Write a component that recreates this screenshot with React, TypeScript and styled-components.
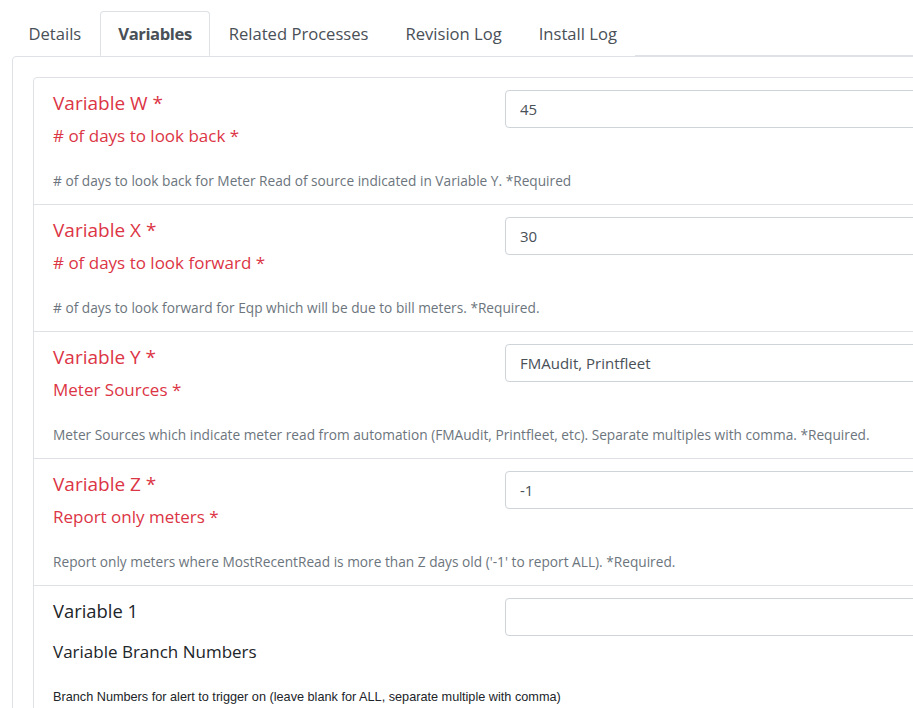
import React from "react";
import styled, { createGlobalStyle } from "styled-components";

const Global = createGlobalStyle`
  html, body { margin: 0; padding: 0; background: #fff; overflow: hidden; }
  body { font-family: "Open Sans", "Noto Sans", sans-serif; color: #212529; }
  * { box-sizing: border-box; }
`;

const Page = styled.div`
  width: 1300px;
  padding-top: 11px;
`;

const TabBar = styled.ul`
  display: flex;
  list-style: none;
  margin: 0 0 0 10px;
  padding: 0;
  border-bottom: 1px solid #dee2e6;
`;

const Tab = styled.li<{ $active?: boolean }>`
  height: 45px;
  display: flex;
  align-items: center;
  padding: 0 17.5px;
  margin-bottom: -1px;
  font-size: 16.6px;
  color: #495057;
  font-weight: ${(p) => (p.$active ? 700 : 400)};
  letter-spacing: ${(p) => (p.$active ? "-0.4px" : "0")};
  background: #fff;
  border: 1px solid ${(p) => (p.$active ? "#dee2e6" : "transparent")};
  border-bottom-color: ${(p) => (p.$active ? "#fff" : "transparent")};
  border-radius: 4px 4px 0 0;
`;

const Panel = styled.div`
  margin: 0 0 0 12px;
  border: 1px solid #dee2e6;
  border-radius: 4px;
  padding: 20px;
`;

const Card = styled.div`
  border: 1px solid #dee2e6;
  border-radius: 4px;
`;

const Row = styled.div`
  display: grid;
  grid-template-columns: 452px 1fr;
  padding: 10px 0 13px 19px;
  border-bottom: 1px solid #dee2e6;
  &:last-child { border-bottom: none; }
`;

const LabelCol = styled.div`
  display: flex;
  flex-direction: column;
`;

const Label = styled.div<{ $required?: boolean; $gap?: number; $size: number }>`
  font-size: ${(p) => p.$size}px;
  line-height: 30px;
  margin-top: ${(p) => p.$gap ?? 0}px;
  color: ${(p) => (p.$required ? "#dc3545" : "#212529")};
  white-space: nowrap;
`;

const Help = styled.div<{ $plain?: boolean }>`
  margin-top: 20px;
  line-height: 20px;
  white-space: nowrap;
  font-size: ${(p) => (p.$plain ? "12.7px" : "13.7px")};
  font-family: ${(p) =>
    p.$plain ? `"Liberation Sans", Arial, sans-serif` : `"Open Sans", "Noto Sans", sans-serif`};
  color: ${(p) => (p.$plain ? "#212529" : "#6c757d")};
`;

const Input = styled.input`
  margin-top: 2px;
  height: 38px;
  width: 100%;
  border: 1px solid #ced4da;
  border-radius: 4px;
  padding: 0 14px;
  font-family: "Open Sans", "Noto Sans", sans-serif;
  font-size: 15px;
  color: #495057;
  background: #fff;
  outline: none;
`;

type Variable = {
  name: string;
  title: string;
  help: string;
  value: string;
  required: boolean;
};

const variables: Variable[] = [
  {
    name: "Variable W *",
    title: "# of days to look back *",
    help: "# of days to look back for Meter Read of source indicated in Variable Y. *Required",
    value: "45",
    required: true,
  },
  {
    name: "Variable X *",
    title: "# of days to look forward *",
    help: "# of days to look forward for Eqp which will be due to bill meters. *Required.",
    value: "30",
    required: true,
  },
  {
    name: "Variable Y *",
    title: "Meter Sources *",
    help: "Meter Sources which indicate meter read from automation (FMAudit, Printfleet, etc). Separate multiples with comma. *Required.",
    value: "FMAudit, Printfleet",
    required: true,
  },
  {
    name: "Variable Z *",
    title: "Report only meters *",
    help: "Report only meters where MostRecentRead is more than Z days old ('-1' to report ALL). *Required.",
    value: "-1",
    required: true,
  },
  {
    name: "Variable 1",
    title: "Variable Branch Numbers",
    help: "Branch Numbers for alert to trigger on (leave blank for ALL, separate multiple with comma)",
    value: "",
    required: false,
  },
];

const tabs = ["Details", "Variables", "Related Processes", "Revision Log", "Install Log"];

export default function App() {
  return (
    <>
      <Global />
      <Page>
        <TabBar>
          {tabs.map((t) => (
            <Tab key={t} $active={t === "Variables"}>
              {t}
            </Tab>
          ))}
        </TabBar>
        <Panel>
          <Card>
            {variables.map((v) => (
              <Row key={v.name}>
                <LabelCol>
                  <Label $required={v.required} $size={v.required ? 19 : 18.4}>
                    {v.name}
                  </Label>
                  <Label $required={v.required} $size={17} $gap={v.required ? 3 : 11}>
                    {v.title}
                  </Label>
                  <Help $plain={!v.required}>{v.help}</Help>
                </LabelCol>
                <div>
                  <Input defaultValue={v.value} />
                </div>
              </Row>
            ))}
          </Card>
        </Panel>
      </Page>
    </>
  );
}
